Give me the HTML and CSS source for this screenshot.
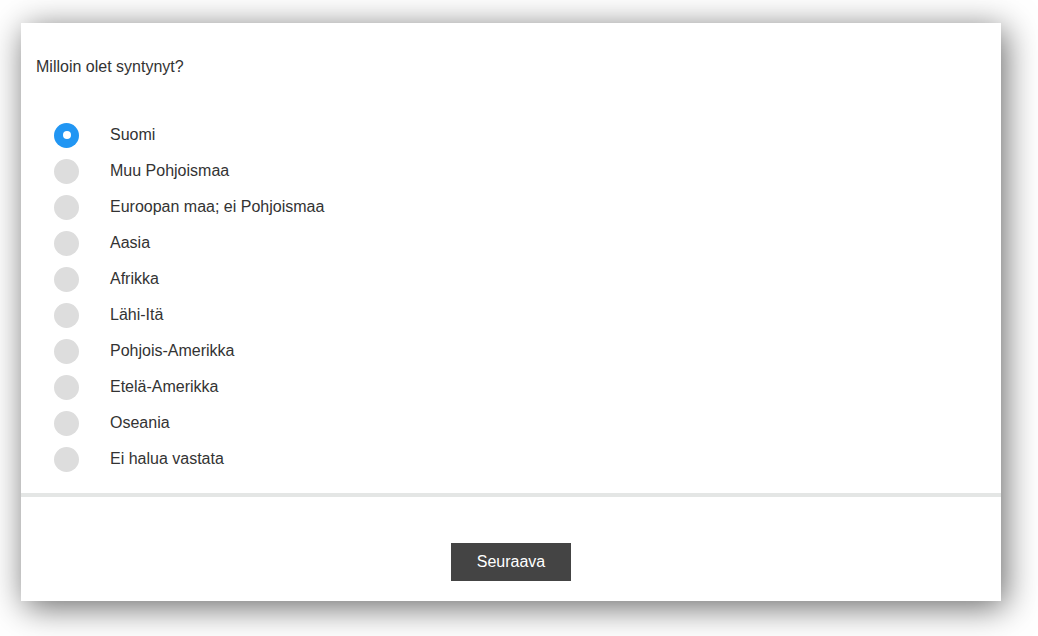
FILE: index.html
```html
<!DOCTYPE html>
<html lang="fi">
<head>
<meta charset="utf-8">
<title>Kysely</title>
<link rel="stylesheet" href="styles.css">
</head>
<body>
<div class="card">
  <div class="question">Milloin olet syntynyt?</div>
  <ul class="options">
    <li class="option"><span class="radio checked"></span><span class="label">Suomi</span></li>
    <li class="option"><span class="radio"></span><span class="label">Muu Pohjoismaa</span></li>
    <li class="option"><span class="radio"></span><span class="label">Euroopan maa; ei Pohjoismaa</span></li>
    <li class="option"><span class="radio"></span><span class="label">Aasia</span></li>
    <li class="option"><span class="radio"></span><span class="label">Afrikka</span></li>
    <li class="option"><span class="radio"></span><span class="label">Lähi-Itä</span></li>
    <li class="option"><span class="radio"></span><span class="label">Pohjois-Amerikka</span></li>
    <li class="option"><span class="radio"></span><span class="label">Etelä-Amerikka</span></li>
    <li class="option"><span class="radio"></span><span class="label">Oseania</span></li>
    <li class="option"><span class="radio"></span><span class="label">Ei halua vastata</span></li>
  </ul>
  <div class="divider"></div>
  <div class="footer">
    <button class="next" type="button">Seuraava</button>
  </div>
</div>
</body>
</html>
```

FILE: styles.css
```css
html, body {
  margin: 0;
  padding: 0;
  background: #ffffff;
}
body {
  font-family: "Liberation Sans", Arial, sans-serif;
  color: #333333;
  padding: 23px 0 35px 21px;
  min-height: 636px;
  box-sizing: border-box;
}
.card {
  width: 980px;
  height: 578px;
  background: #ffffff;
  box-shadow: 4px 6px 32px rgba(0, 0, 0, 0.6);
  display: flex;
  flex-direction: column;
}
.question {
  font-size: 16px;
  line-height: 20px;
  padding: 34px 0 0 15px;
}
.options {
  list-style: none;
  margin: 40px 0 0 0;
  padding: 0 0 0 33px;
}
.option {
  height: 36px;
  display: flex;
  align-items: center;
  font-size: 16px;
}
.radio {
  width: 25px;
  height: 25px;
  border-radius: 50%;
  background: #dddddd;
  flex: none;
  display: flex;
  align-items: center;
  justify-content: center;
  margin-right: 31px;
}
.radio.checked {
  background: #2196f3;
}
.radio.checked::after {
  content: "";
  width: 8px;
  height: 8px;
  border-radius: 50%;
  background: #ffffff;
}
.label {
  line-height: 20px;
}
.divider {
  height: 4px;
  background: #e4e6e5;
  margin-top: 16px;
}
.footer {
  display: flex;
  justify-content: center;
  padding-top: 46px;
}
.next {
  width: 120px;
  height: 38px;
  border: none;
  border-radius: 0;
  background: #444444;
  color: #ffffff;
  font-family: "Liberation Sans", Arial, sans-serif;
  font-size: 16px;
  padding: 0;
  cursor: pointer;
}
```
